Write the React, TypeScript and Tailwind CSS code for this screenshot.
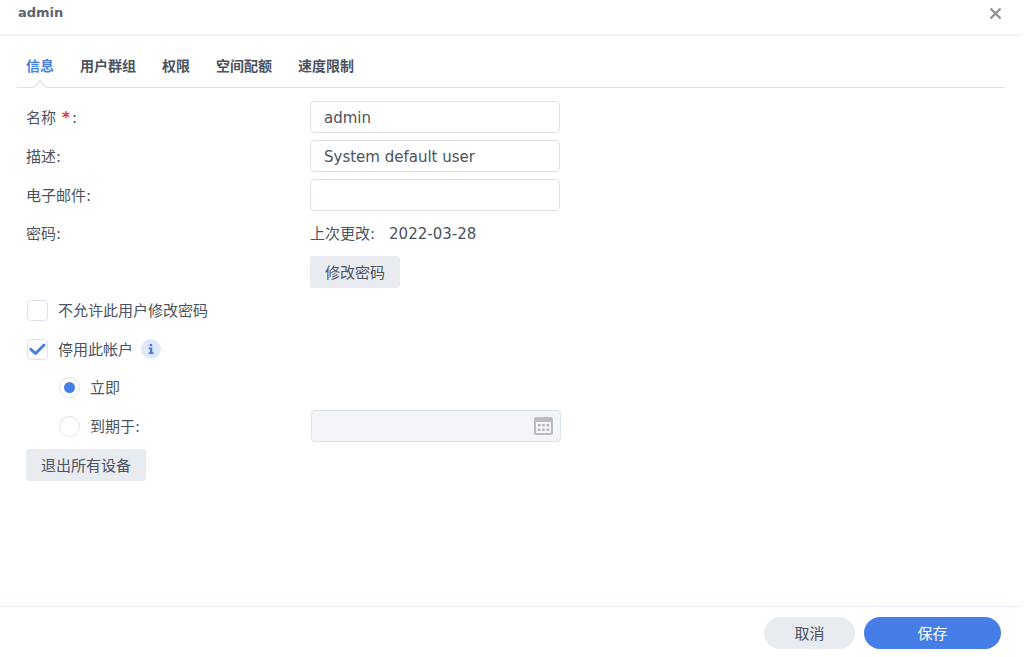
import { useState } from "react";
import clsx from "clsx";

const tabs = ["信息", "用户群组", "权限", "空间配额", "速度限制"];

const inputClass =
  "h-8 w-[250px] rounded-[4px] border border-[#dde3ed] bg-white px-[13px] pt-0.5 text-[#4b535e] outline-none focus:border-[#467ee8]";

function Field({ id, label, required, value }: { id: string; label: string; required?: boolean; value: string }) {
  return (
    <div className="flex h-8 items-center">
      <label htmlFor={id} className="w-[284px] shrink-0 pt-px">
        {label}
        {required && <span className="mr-0.5 ml-1.5 font-bold text-[#d93a3a]">*</span>}:
      </label>
      <input id={id} type="text" defaultValue={value} className={inputClass} />
    </div>
  );
}

function Checkbox({ id, label, checked }: { id: string; label: string; checked?: boolean }) {
  return (
    <div className="flex items-center gap-2.5">
      <span className="grid size-[21px] shrink-0 place-items-center">
        <input
          id={id}
          type="checkbox"
          defaultChecked={checked}
          className="peer col-start-1 row-start-1 size-[21px] appearance-none rounded-[4px] border border-[#dde3ed] bg-white"
        />
        <svg viewBox="0 0 17 13" className="pointer-events-none invisible col-start-1 row-start-1 h-[13px] w-[17px] peer-checked:visible">
          <path d="M1.8 6.2 6.6 10.6 15 2" fill="none" stroke="#467ee8" strokeWidth="2.8" strokeLinecap="round" strokeLinejoin="round" />
        </svg>
      </span>
      <label htmlFor={id} className="pt-px">
        {label}
      </label>
    </div>
  );
}

function Radio({ id, label, checked }: { id: string; label: string; checked?: boolean }) {
  return (
    <div className="flex items-center gap-2.5">
      <span className="grid size-[21px] shrink-0 place-items-center">
        <input
          id={id}
          type="radio"
          name="disable-mode"
          defaultChecked={checked}
          className="peer col-start-1 row-start-1 size-[21px] appearance-none rounded-full border border-[#dde3ed] bg-white"
        />
        <span className="pointer-events-none invisible col-start-1 row-start-1 size-[11px] rounded-full bg-[#467ee8] peer-checked:visible" />
      </span>
      <label htmlFor={id} className="pt-px">
        {label}
      </label>
    </div>
  );
}

function CalendarIcon() {
  return (
    <svg viewBox="0 0 19 18" className="h-[18px] w-[19px]">
      <rect x="1" y="1" width="17" height="16" rx="1.5" fill="#f3f5f9" stroke="#b8bbc3" strokeWidth="2" />
      <path d="M1 1h17v4H1z" fill="#b8bbc3" />
      <g fill="#b2b5bd">
        <rect x="4" y="7" width="2.4" height="2.4" />
        <rect x="8.3" y="7" width="2.4" height="2.4" />
        <rect x="12.6" y="7" width="2.4" height="2.4" />
        <rect x="4" y="11.6" width="2.4" height="2.4" />
        <rect x="8.3" y="11.6" width="2.4" height="2.4" />
        <rect x="12.6" y="11.6" width="2.4" height="2.4" />
      </g>
    </svg>
  );
}

export default function App() {
  const [active, setActive] = useState(tabs[0]);

  return (
    <div className="flex min-h-screen flex-col bg-white pr-[3px] font-['DejaVu_Sans','Noto_Sans_CJK_SC',sans-serif] text-[15px] leading-5 text-[#4b535e]">
      <header className="flex items-center justify-between border-b-2 border-[#eff2f8] pt-1 pr-[19px] pb-3 pl-[18px]">
        <h1 className="text-[13px] leading-[18px] font-bold text-[#5d6570]">admin</h1>
        <button type="button" aria-label="关闭">
          <svg viewBox="0 0 13 13" className="size-[13px]">
            <path d="M1.5 1.5 11.5 11.5M11.5 1.5 1.5 11.5" stroke="#8e9299" strokeWidth="2.3" />
          </svg>
        </button>
      </header>

      <main className="flex-1 pr-4 pl-[17px]">
        <nav className="flex gap-[26px] border-b border-[#dde3ec] pt-5 pl-[9px]">
          {tabs.map((tab) => (
            <button
              key={tab}
              type="button"
              onClick={() => setActive(tab)}
              className={clsx("relative pb-[11px] text-sm leading-5 font-bold", active === tab && "text-[#467ee8]")}
            >
              {tab}
              {active === tab && (
                <svg viewBox="0 0 16 8" className="absolute -bottom-px left-1/2 h-2 w-4 -translate-x-1/2">
                  <path d="M1 8 8 1 15 8z" fill="#fff" />
                  <path d="M0 7.5H1.5L8 1 14.5 7.5H16" fill="none" stroke="#dde3ec" strokeWidth="1.2" />
                </svg>
              )}
            </button>
          ))}
        </nav>

        <form className="flex flex-col gap-1.5 pt-[13px] pl-[9px]">
          <div className="flex flex-col gap-[7px]">
            <Field id="name" label="名称" required value="admin" />
            <Field id="description" label="描述" value="System default user" />
            <Field id="email" label="电子邮件" value="" />
          </div>

          <div className="flex flex-col gap-[7px]">
            <div className="flex h-8 items-center pt-px">
              <span className="w-[284px] shrink-0">密码:</span>
              <span>上次更改:</span>
              <span className="ml-3.5">2022-03-28</span>
            </div>
            <div className="flex pl-[284px]">
              <button type="button" className="h-8 rounded-[3px] bg-[#e8ebf0] px-[15px] pt-px">
                修改密码
              </button>
            </div>
          </div>

          <div className="flex flex-col gap-[7px] pl-px">
            <div className="flex h-8 items-center">
              <Checkbox id="no-change" label="不允许此用户修改密码" />
            </div>
            <div className="flex h-8 items-center gap-2">
              <Checkbox id="disable" label="停用此帐户" checked />
              <svg viewBox="0 0 20 20" className="size-5" role="img" aria-label="说明">
                <circle cx="10" cy="10" r="10" fill="#dfe8fb" />
                <path d="M8.6 5h2.6v2.2H8.6zM7.8 8.6h3.5v4.7h1.2V15H7.7v-1.7H9v-3H7.8z" fill="#467ee8" />
              </svg>
            </div>
          </div>

          <div className="flex flex-col gap-[7px]">
            <div className="flex h-8 items-center pl-[33px]">
              <Radio id="immediately" label="立即" checked />
            </div>
            <div className="flex h-8 items-center pl-px">
              <div className="w-[284px] shrink-0 pl-8">
                <Radio id="expires" label="到期于:" />
              </div>
              <div className="flex h-8 w-[250px] items-center rounded-[4px] border border-[#dae2eb] bg-[#f3f5f9] pr-[7px]">
                <input type="text" aria-label="到期于" disabled className="min-w-0 flex-1 px-3" />
                <button type="button" aria-label="选择日期" disabled>
                  <CalendarIcon />
                </button>
              </div>
            </div>
            <div className="flex">
              <button type="button" className="h-8 rounded-[3px] bg-[#e8ebf0] px-[15px] pt-px">
                退出所有设备
              </button>
            </div>
          </div>
        </form>
      </main>

      <footer className="flex justify-end gap-[9px] border-t border-[#e6ebf3] pt-2.5 pr-5 pb-2">
        <button type="button" className="h-8 w-[91px] rounded-full bg-[#e8ebf0] pt-px">
          取消
        </button>
        <button type="button" className="h-8 w-[137px] rounded-full bg-[#467ee8] pt-px text-white">
          保存
        </button>
      </footer>
    </div>
  );
}
